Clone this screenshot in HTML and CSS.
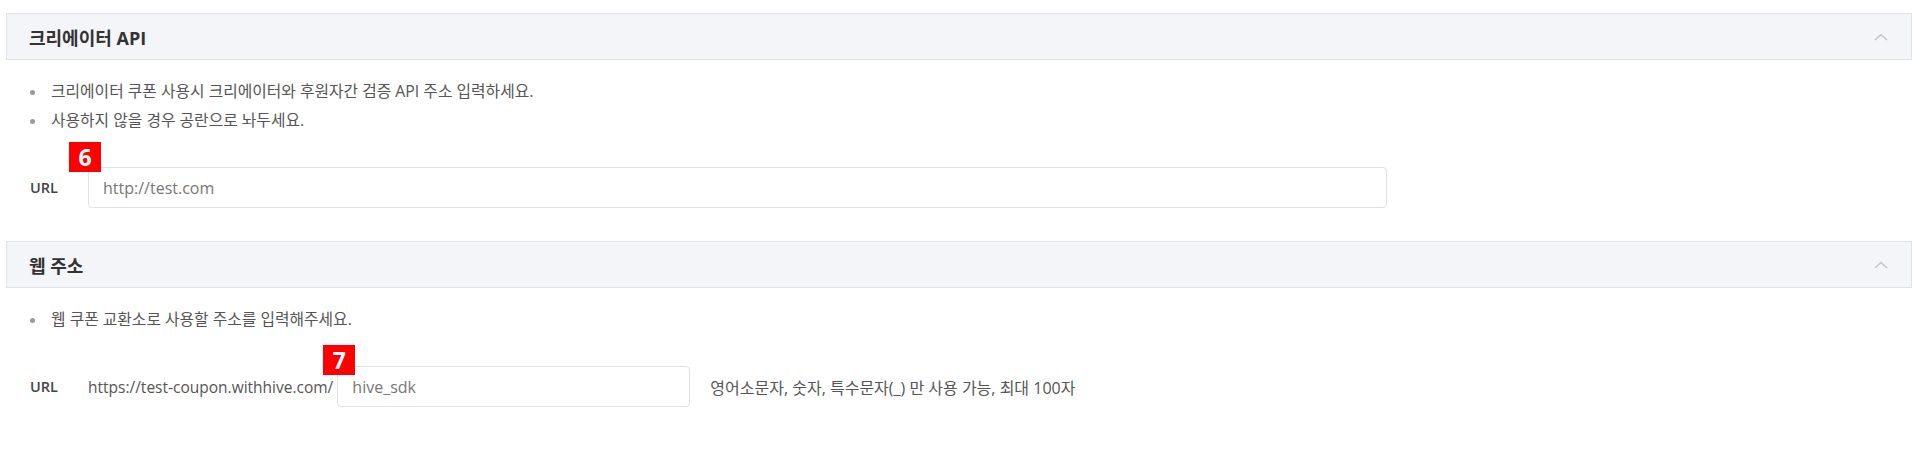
FILE: index.html
```html
<!DOCTYPE html>
<html lang="ko">
<head>
<meta charset="utf-8">
<title>크리에이터 API</title>
<link rel="stylesheet" href="styles.css">
</head>
<body>
<div class="page">
  <section class="section">
    <div class="section-head">
      <h2 class="section-title">크리에이터 API</h2>
      <svg class="chevron" width="14" height="8" viewBox="0 0 14 8"><polyline points="1,7 7,1.5 13,7" fill="none" stroke="#c4c6cb" stroke-width="1.6"/></svg>
    </div>
    <div class="section-body">
      <ul class="notes">
        <li>크리에이터 쿠폰 사용시 크리에이터와 후원자간 검증 API 주소 입력하세요.</li>
        <li>사용하지 않을 경우 공란으로 놔두세요.</li>
      </ul>
      <div class="field-row">
        <span class="field-label">URL</span>
        <div class="input-wrap">
          <input class="text-input wide" type="text" value="http://test.com">
          <span class="badge badge-a">6</span>
        </div>
      </div>
    </div>
  </section>
  <section class="section">
    <div class="section-head">
      <h2 class="section-title">웹 주소</h2>
      <svg class="chevron" width="14" height="8" viewBox="0 0 14 8"><polyline points="1,7 7,1.5 13,7" fill="none" stroke="#c4c6cb" stroke-width="1.6"/></svg>
    </div>
    <div class="section-body">
      <ul class="notes">
        <li>웹 쿠폰 교환소로 사용할 주소를 입력해주세요.</li>
      </ul>
      <div class="field-row field-row-prefixed">
        <span class="field-label">URL</span>
        <span class="prefix">https://test-coupon.withhive.com/</span>
        <div class="input-wrap">
          <input class="text-input narrow" type="text" value="hive_sdk">
          <span class="badge badge-b">7</span>
        </div>
        <span class="hint">영어소문자, 숫자, 특수문자(_) 만 사용 가능, 최대 100자</span>
      </div>
    </div>
  </section>
</div>
</body>
</html>
```

FILE: styles.css
```css
* { box-sizing: border-box; }

body {
  margin: 0;
  background: #fff;
  font-family: "Open Sans", "Noto Sans CJK KR", sans-serif;
  color: #555;
  font-size: 15.8px;
}

.page {
  padding: 13px 4px 0 6px;
}

.section-head {
  height: 47px;
  border: 1px solid #e2e3e7;
  background: #f4f5f8;
  display: flex;
  align-items: center;
  justify-content: space-between;
  padding: 0 23px 0 22px;
}

.section-title {
  margin: 0;
  font-size: 18px;
  font-weight: 700;
  color: #333;
  line-height: 1;
  padding-top: 2px;
}

.chevron { display: block; }

.section-body {
  padding: 17px 0 33px 24px;
}

.notes {
  list-style: none;
  margin: 0 0 32px;
  padding: 0;
}

.notes li {
  position: relative;
  padding-left: 21px;
  line-height: 29px;
  font-size: 15.8px;
  color: #555;
}

.notes li::before {
  content: "";
  position: absolute;
  left: 0;
  top: 13px;
  width: 5px;
  height: 5px;
  border-radius: 50%;
  background: #9a9a9a;
}

.field-row {
  display: flex;
  align-items: center;
}

.field-row-prefixed {
  margin-top: 6px;
}

.field-label {
  width: 58px;
  flex: none;
  font-size: 14.5px;
  font-weight: 600;
  color: #444;
}

.prefix {
  font-size: 15.5px;
  color: #555;
  margin-right: 4px;
  white-space: nowrap;
}

.input-wrap {
  position: relative;
  flex: none;
}

.text-input {
  display: block;
  height: 41px;
  border: 1px solid #e1e2e5;
  border-radius: 4px;
  padding: 0 14px;
  font-family: "Open Sans", "Noto Sans CJK KR", sans-serif;
  font-size: 16px;
  color: #777;
  background: #fff;
  outline: none;
}

.text-input.wide { width: 1299px; }
.text-input.narrow { width: 353px; }

.hint {
  margin-left: 20px;
  font-size: 16px;
  color: #555;
  white-space: nowrap;
}

.badge {
  position: absolute;
  width: 32px;
  height: 30px;
  background: #ff0000;
  color: #fff;
  font-family: "Open Sans", sans-serif;
  font-weight: 700;
  font-size: 23px;
  line-height: 30px;
  text-align: center;
}

.badge-a { left: -19px; top: -25px; }
.badge-b { left: -14px; top: -21px; }
```
